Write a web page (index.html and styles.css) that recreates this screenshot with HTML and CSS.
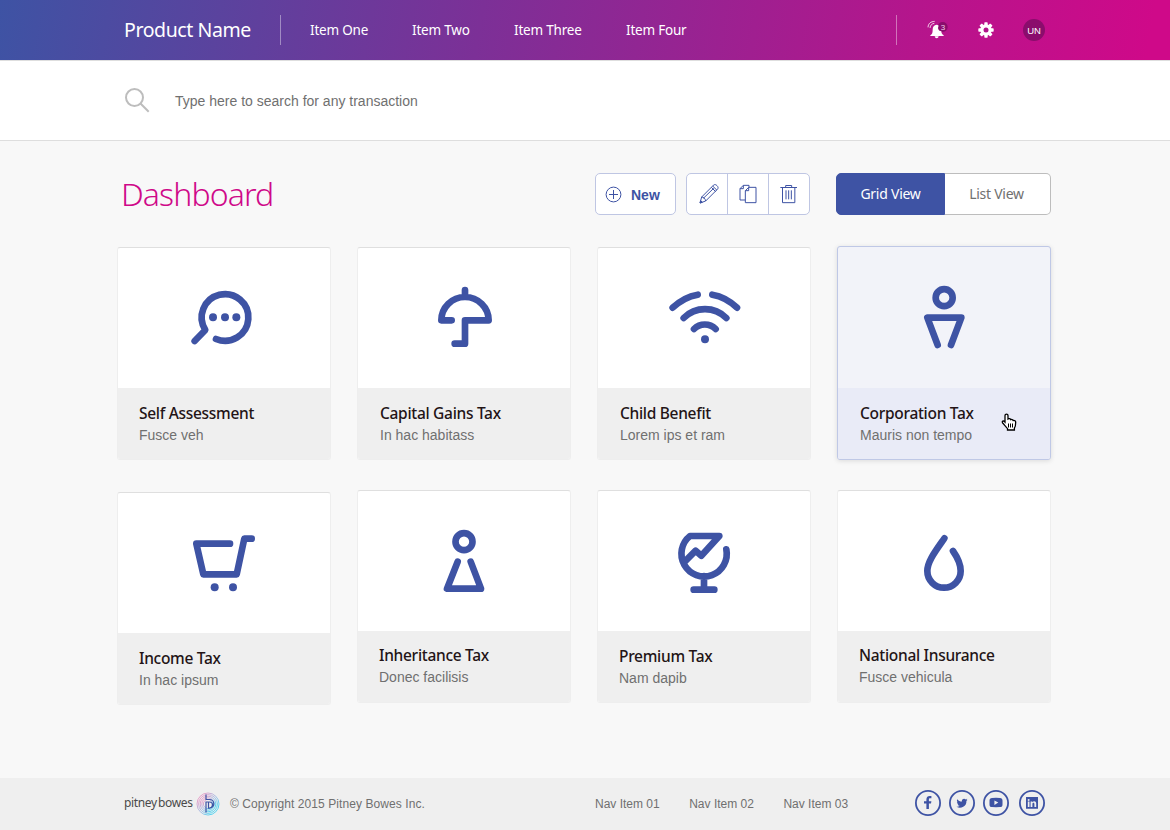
FILE: index.html
```html
<!DOCTYPE html>
<html lang="en">
<head>
<meta charset="utf-8">
<title>Dashboard</title>
<link rel="stylesheet" href="styles.css">
</head>
<body>
<header class="topbar">
  <div class="brand">Product Name</div>
  <nav class="mainnav">
    <a class="n1">Item One</a><a class="n2">Item Two</a><a class="n3">Item Three</a><a class="n4">Item Four</a>
  </nav>
  <div class="tools">
    <svg class="bell" width="24" height="22" viewBox="0 0 72 66">
      <circle cx="50" cy="24" r="15" fill="#8a0d6c"/>
      <path d="M32 17c-8 0-12 7-12 15 0 10-2 14-7 17v2h40v-2c-5-3-7-7-7-12-9-2-12-9-8-17-2-2-4-3-6-3z" fill="#fff"/>
      <path d="M26 52h12c-1 8-11 8-12 0z" fill="#fff"/>
      <path d="M6 25C7 13 14 8 26 7M12 27c1-9 6-13 13-14" fill="none" stroke="#fff" stroke-width="2.800" opacity=".85"/>
      <text class="count" x="44" y="32">3</text>
    </svg>
    <svg class="gear" width="16" height="16" viewBox="-24 -24 48 48">
      <g fill="#fff"><rect x="-5" y="-23" width="10" height="46" rx="2"/><rect x="-5" y="-23" width="10" height="46" rx="2" transform="rotate(45)"/><rect x="-5" y="-23" width="10" height="46" rx="2" transform="rotate(90)"/><rect x="-5" y="-23" width="10" height="46" rx="2" transform="rotate(135)"/><circle r="17"/></g>
      <circle r="7.500" fill="#b0148a"/>
    </svg>
    <span class="avatar">UN</span>
  </div>
</header>
<section class="search">
  <svg width="26" height="26" viewBox="0 0 26 26" fill="none" stroke="#bdbdbd" stroke-width="2"><circle cx="10.500" cy="9.500" r="8.500"/><path d="M16.500 15.500l8.200 8.200"/></svg>
  <span>Type here to search for any transaction</span>
</section>
<main class="main">
  <div class="heading">
    <h1>Dashboard</h1>
    <div class="btn new">
      <svg width="17" height="17" viewBox="0 0 17 17" fill="none" stroke="#3e53a4"><circle cx="8.500" cy="8.500" r="7.400"/><path d="M8.500 4v9M4 8.500h9"/></svg>
      <span>New</span>
    </div>
    <div class="btn group">
      <span class="edit"><svg width="20" height="20" viewBox="0 0 60 60" fill="none" stroke="#3e53a4" stroke-width="3" stroke-linejoin="round"><path d="M3 57l5-18L43 4c4-4 8-2 11 1s5 7 1 11L20 51zM8 39c6 0 11 5 12 12M37 10l13 13M41 6l13 13M13 43L44 13M3 57l2-7 5 5z"/></svg></span>
      <span><svg width="18" height="20" viewBox="0 0 54 60" fill="none" stroke="#3e53a4" stroke-width="3"><path d="M29 10h22v46H19V20zM29 10v10H19M19 48H3V14L13 4h17v6M13 4v10H3"/></svg></span>
      <span><svg width="18" height="20" viewBox="0 0 54 60" fill="none" stroke="#3e53a4" stroke-width="3"><path d="M1 10.500h50M7.500 10v46h37V10M17 10V4.500h18v6M18 19v27M26 19v27M34 19v27"/></svg></span>
    </div>
    <div class="toggle"><span class="on">Grid View</span><span class="off">List View</span></div>
  </div>

  <div class="grid">
    <article class="card">
      <svg class="pic" viewBox="54 39 636 420"><path d="M348 312A70 70 0 1 0 316 285L284 318"/><g class="dots"><circle cx="339" cy="247" r="12"/><circle cx="375" cy="247" r="12"/><circle cx="409" cy="247" r="12"/></g></svg>
      <div class="label"><h2>Self Assessment</h2><p>Fusce veh</p></div>
    </article>
    <article class="card inset">
      <svg class="pic" viewBox="24 39 636 420"><path d="M305 256H274A71 70 0 0 1 416 256H345V326H314M345 186V165"/></svg>
      <div class="label"><h2>Capital Gains Tax</h2><p>In hac habitass</p></div>
    </article>
    <article class="card inset">
      <svg class="pic" viewBox="24 39 636 420"><path d="M248 218Q282 186 323 179M367 179Q408 186 441 218M281 249A90.500 90.500 0 0 1 409 249M312 282A46 46 0 0 1 377 282"/><circle class="dots" cx="345" cy="313" r="12"/></svg>
      <div class="label"><h2>Child Benefit</h2><p>Lorem ips et ram</p></div>
    </article>
    <article class="card inset active">
      <svg class="pic" viewBox="39 36 636 423"><circle cx="357.500" cy="188" r="25.500"/><path d="M338 330L307 248H409L378 330"/></svg>
      <div class="label"><h2>Corporation Tax</h2><p>Mauris non tempo</p></div>
      <svg class="cursor" width="16" height="19" viewBox="0 0 16 19"><path d="M4 9V2.800c0-2.300 3-2.300 3 0V6c1-.8 2.400-.4 2.700.6 1-.5 2.200 0 2.500.9 1.400-.3 2.500.4 2.500 1.800 0 2.700-.2 4.300-1.300 5.900V17H6.500v-1.400C4.600 13.800 3.800 12.400 1.700 10c-1.300-1.600.7-3 2.300-1z" fill="#fff" stroke="#000" stroke-width="1.300"/><path d="M7.500 10.500v4M9.500 10.500v4M11.500 10.500v4" stroke="#000"/></svg>
    </article>
    <article class="card low">
      <svg class="pic" viewBox="54 24 636 420"><path d="M390 176H289L310 268H410L433 161H455"/><g class="dots"><circle cx="344" cy="307" r="12"/><circle cx="399" cy="307" r="12"/></g></svg>
      <div class="label"><h2>Income Tax</h2><p>In hac ipsum</p></div>
    </article>
    <article class="card up">
      <svg class="pic" viewBox="774 18 636 420"><circle cx="1092" cy="170" r="25.500"/><path d="M1073 230L1041 311H1143L1112 230"/></svg>
      <div class="label"><h2>Inheritance Tax</h2><p>Donec facilisis</p></div>
    </article>
    <article class="card">
      <svg class="pic" viewBox="24 18 636 420"><path d="M409 193A68 68 0 1 1 300 153H388L334 212L317 197L285 229M342 273V314M311 314H373"/></svg>
      <div class="label"><h2>Premium Tax</h2><p>Nam dapib</p></div>
    </article>
    <article class="card up">
      <svg class="pic" viewBox="744 18 636 420"><path d="M1063 160C1035 200 1012 230 1012 258A50 50 0 0 0 1112 258C1112 238 1103 218 1089 198"/></svg>
      <div class="label"><h2>National Insurance</h2><p>Fusce vehicula</p></div>
    </article>
  </div>
</main>
<footer class="footer">
  <span class="pb">pitney bowes</span>
  <svg class="pblogo" width="24" height="24" viewBox="0 0 24 24" fill="none">
    <defs><linearGradient id="ring" x1="0" y1="0" x2="1" y2="1"><stop offset=".15" stop-color="#e58cc0"/><stop offset=".55" stop-color="#8ab8e6"/><stop offset=".8" stop-color="#35cdf0"/></linearGradient></defs>
    <g stroke="url(#ring)" stroke-width=".8"><circle cx="12" cy="12" r="11"/><circle cx="12" cy="12" r="9.400"/><circle cx="12" cy="12" r="7.800"/><circle cx="12" cy="12" r="6.200"/><circle cx="12" cy="12" r="4.600"/></g>
    <path d="M10 2.500V7.500h3.500a4.300 4.300 0 0 1 0 8.600H12.500V10M10 20.500V10h3.500a2.500 2.500 0 0 1 0 6" stroke="#3e53a4" stroke-width="1.200"/>
  </svg>
  <span class="copy">© Copyright 2015 Pitney Bowes Inc.</span>
  <nav class="footnav"><a>Nav Item 01</a><a>Nav Item 02</a><a>Nav Item 03</a></nav>
  <div class="social">
    <svg viewBox="-13 -13 26 26"><circle r="12.100"/><path class="f" d="M-1.600 6V.6H-4v-2.300h2.400v-1.900C-1.600-6-.2-7.100 1.700-7.100H3.400v2.300H2.200C1.200-4.800.9-4.300.9-3.500v1.800h2.500L3 .6H.9V6z"/></svg>
    <svg viewBox="-13 -13 26 26"><circle r="12.100"/><path class="f" transform="translate(-5.600 -5.400) scale(.47)" d="M23.600 4.600c-.9.400-1.800.6-2.800.8 1-.6 1.800-1.500 2.100-2.700-.9.600-2 1-3 1.200A4.800 4.800 0 0 0 11.700 8.300C7.700 8.100 4.200 6.200 1.800 3.300.5 5.500 1.100 8.300 3.300 9.700c-.8 0-1.500-.2-2.200-.6 0 2.300 1.600 4.400 3.900 4.900-.7.200-1.500.2-2.200.1.600 2 2.400 3.300 4.500 3.400A9.800 9.800 0 0 1 .2 19.500 13.800 13.800 0 0 0 21.300 7.100c.9-.7 1.700-1.500 2.300-2.500z"/></svg>
    <svg viewBox="-13 -13 26 26"><circle r="12.100"/><path class="f" fill-rule="evenodd" d="M-6.500-2.500C-6.500-4.300-5.700-5-4-5.100Q0-5.400 4-5.100C5.700-5 6.500-4.300 6.500-2.500V1.500C6.500 3.300 5.700 4 4 4.100Q0 4.400-4 4.100C-5.700 4-6.500 3.300-6.500 1.500zM-1.600-2.600V1.900L2.300-.4z"/></svg>
    <svg class="li" viewBox="-13 -13 26 26"><circle r="12.100"/><path class="f" fill-rule="evenodd" d="M-6-6H6V5.700H-6zM-4.200-1.600V3.900h1.700V-1.600zM-4.300-3.400a1 1 0 1 0 1.900 0 1 1 0 0 0-1.900 0zM-1.400-1.600V3.900H.4V1C.4-.6 2.400-.6 2.400 1V3.900H4.200V.7C4.200-2 1.600-2.200.3-.8V-1.600z"/></svg>
  </div>
</footer>
</body>
</html>
```
FILE: styles.css
```css
* { box-sizing: border-box; }
body {
  margin: 0; width: 1170px; height: 830px; overflow: hidden;
  display: flex; flex-direction: column;
  background: #f8f8f8; color: #707070;
  font: 14px/20px "Liberation Sans", Arial, sans-serif;
}
svg { display: block; flex: none; }
span, a, h1, h2, p { white-space: nowrap; }

.topbar {
  height: 60px; flex: none; display: flex; align-items: center;
  padding-left: 124px; color: #fff;
  font-family: "Noto Sans", sans-serif;
  background: linear-gradient(100deg, #3e53a4 0%, #7c3097 41%, #b5158c 78%, #cf0989 98%);
}
.brand { width: 156px; font-size: 19.500px; letter-spacing: -.4px; }
.mainnav { height: 30px; width: 616px; padding-left: 29px; display: flex; align-items: center; border-left: 1px solid rgba(255,255,255,.4); }
.mainnav a { font-size: 13.500px; letter-spacing: -.2px; }
.n1, .n2 { width: 102px; }
.n3 { width: 112px; }
.tools { height: 30px; display: flex; align-items: center; padding-left: 29px; border-left: 1px solid rgba(255,255,255,.4); }
.count { font: 24px "Liberation Sans", sans-serif; fill: #f0d0e8; }
.gear { margin-left: 27.500px; }
.avatar { width: 22px; height: 22px; margin-left: 29.500px; border-radius: 50%; background: #8a0d6c; font: 9.500px/23px "Liberation Sans", sans-serif; text-align: center; }

.search {
  height: 81px; flex: none; display: flex; align-items: center; padding-left: 124px;
  background: #fff; border-top: 1px solid #dedede; border-bottom: 1px solid #dedede;
}
.search span { margin: 1px 0 0 25px; }

.main { flex: 1; padding: 32px 0 0 117px; }
.heading { display: flex; height: 42px; }
.heading h1 {
  margin: 0 0 0 4px; width: 474px; color: #cf0989;
  font: 330 32px/42px "Noto Sans", "Open Sans", sans-serif; letter-spacing: -.9px;
}
.btn { height: 42px; display: flex; align-items: center; background: #fff; border: 1px solid #bfc6e3; border-radius: 5px; color: #3e53a4; }
.new { width: 81px; padding-left: 9px; margin-right: 10px; }
.new span { margin: 2px 0 0 9px; font-weight: bold; font-size: 14px; }
.group { width: 124px; margin-right: 26px; }
.group span { width: 41px; height: 40px; display: flex; align-items: center; justify-content: center; }
.group span + span { border-left: 1px solid #bfc6e3; }
.group .edit { width: 40px; padding-left: 3px; }
.toggle { display: flex; font: 14px/40px "Noto Sans", sans-serif; text-align: center; letter-spacing: -.25px; }
.on { width: 109px; height: 42px; background: #3e53a4; color: #fff; border: 1px solid #3e53a4; border-radius: 5px 0 0 5px; }
.off { width: 106px; height: 42px; background: #fff; border: 1px solid #bdbdbd; border-left: 0; border-radius: 0 5px 5px 0; padding-right: 2px; }

.grid { display: grid; grid-template-columns: repeat(4, 214px); gap: 30px 26px; padding-top: 32px; align-items: start; }
.card {
  height: 213px; background: #fff; border: 1px solid #eee; border-top-color: #dfdfdf;
  border-radius: 3px; overflow: hidden;
}
.pic { width: 212px; height: 140px; fill: none; stroke: #3e53a4; stroke-width: 20; stroke-linecap: round; stroke-linejoin: round; }
.dots { fill: #3e53a4; stroke: none; }
.label { height: 72px; margin: 0 -1px; padding: 14px 0 0 22px; background: #efefef; }
.label h2 { margin: 0; color: #231416; font: 480 15.500px/22px "Noto Sans", sans-serif; letter-spacing: -.3px; }
.label p { margin: 1px 0 0; }
.inset .label { padding-left: 23px; }
.up .label { padding-top: 13px; }
.low { margin-top: 2px; }
.active { position: relative; height: 214px; margin-top: -1px; background: #f2f3f9; border-color: #bfc8e6; box-shadow: 0 1px 5px rgba(0,0,0,.12); }
.active .pic { height: 141px; }
.active .label { background: #e9ebf7; margin: 0; padding-left: 22px; }
.cursor { position: absolute; left: 163px; top: 166px; }

.footer { height: 52px; flex: none; display: flex; align-items: center; padding-left: 124px; background: #efefef; font-size: 12px; }
.pb { width: 72px; margin-top: -2px; color: #4a4a4a; font: 12px/20px "Noto Sans", sans-serif; letter-spacing: -.35px; word-spacing: -1.500px; }
.copy { width: 375px; padding-left: 10px; letter-spacing: .08px; }
.footnav { display: flex; width: 320px; gap: 29.500px; }
.social { display: flex; gap: 8px; margin-top: -2px; }
.social svg { width: 26px; height: 26px; fill: none; stroke: #3e53a4; stroke-width: 1.800; }
.social .f { fill: #3e53a4; stroke: none; }
.social .li { margin-left: 2px; }
```
